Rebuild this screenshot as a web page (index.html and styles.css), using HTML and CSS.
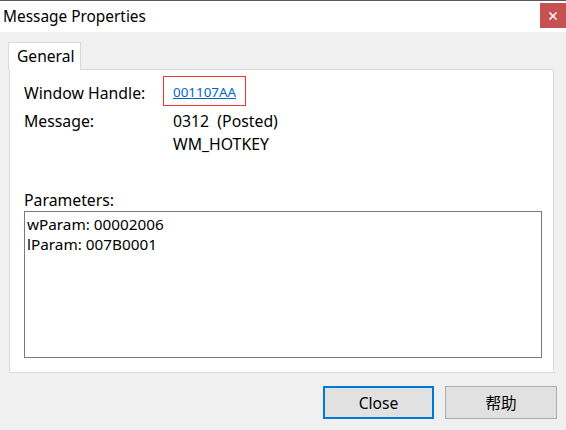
FILE: index.html
```html
<!DOCTYPE html>
<html>
<head>
<meta charset="utf-8">
<link rel="stylesheet" href="styles.css">
</head>
<body>
<div class="window">
  <div class="titlebar">
    <span class="title">Message Properties</span>
    <span class="close-x">
      <svg width="10" height="10" viewBox="0 0 10 10"><path d="M1.5 1.5 L8.5 8.5 M8.5 1.5 L1.5 8.5" stroke="#fff" stroke-width="1.6"/></svg>
    </span>
  </div>
  <div class="client">
    <div class="tabs">
      <div class="tab">General</div>
    </div>
    <div class="panel">
      <div class="row row-handle">
        <span class="label">Window Handle:</span>
        <span class="value"><span class="linkbox"><a class="link" href="#">001107AA</a></span></span>
      </div>
      <div class="row row-msg">
        <span class="label">Message:</span>
        <span class="value">0312&nbsp; (Posted)<br>WM_HOTKEY</span>
      </div>
      <div class="params-label">Parameters:</div>
      <div class="params">wParam: 00002006<br>lParam: 007B0001</div>
    </div>
    <div class="buttons">
      <button class="btn btn-default">Close</button>
      <button class="btn">帮助</button>
    </div>
  </div>
</div>
</body>
</html>
```

FILE: styles.css
```css
* { box-sizing: border-box; }
html, body { margin: 0; padding: 0; }
body {
  width: 566px;
  height: 430px;
  overflow: hidden;
  font-family: "Noto Sans", "Noto Sans CJK SC", sans-serif;
  font-size: 15.8px;
  color: #000;
  background: #f0f0f0;
}
.window {
  width: 566px;
  height: 430px;
  border-top: 1px solid #5a5a5a;
  display: flex;
  flex-direction: column;
}
.titlebar {
  height: 31px;
  background: #fff;
  display: flex;
  align-items: flex-start;
  justify-content: space-between;
}
.title {
  padding-left: 3px;
  line-height: 31px;
  font-size: 15.4px;
}
.close-x {
  width: 26px;
  height: 25px;
  margin-top: 2px;
  background: #c75050;
  display: flex;
  align-items: center;
  justify-content: center;
}
.client {
  flex: 1;
  background: #f0f0f0;
  padding: 10px 9px 0 8px;
}
.tabs {
  display: flex;
  height: 27px;
  position: relative;
  z-index: 1;
}
.tab {
  width: 73px;
  height: 28px;
  background: #fff;
  border: 1px solid #d9d9d9;
  border-bottom: none;
  padding-left: 8px;
  line-height: 27px;
  font-size: 15.6px;
}
.panel {
  margin-left: 1px;
  width: 545px;
  height: 304px;
  background: #fff;
  border: 1px solid #d9d9d9;
  padding: 6px 0 0 14px;
}
.row {
  display: flex;
}
.label {
  width: 149px;
  flex: none;
}
.row-handle {
  height: 30px;
  align-items: center;
}
.row-handle .label {
  padding-top: 3px;
}
.linkbox {
  display: inline-block;
  border: 1px solid #f03434;
  height: 30px;
  width: 83px;
  margin-left: -10px;
  padding-left: 9px;
  line-height: 28px;
}
.link {
  color: #0066cc;
  text-decoration: underline;
  font-size: 13.4px;
}
.row-msg {
  margin-top: 4px;
  line-height: 23px;
}
.params-label {
  margin-top: 33px;
  line-height: 22px;
}
.params {
  margin-top: 0;
  width: 518px;
  height: 147px;
  border: 1px solid #7a7a7a;
  padding: 2px 0 0 2px;
  line-height: 20px;
  font-size: 15.3px;
}
.buttons {
  display: flex;
  justify-content: flex-end;
  gap: 11px;
  margin-top: 13px;
}
.btn {
  width: 112px;
  height: 33px;
  background: #e1e1e1;
  border: 1px solid #adadad;
  font-family: "Noto Sans", "Noto Sans CJK SC", sans-serif;
  font-size: 15.6px;
  color: #000;
  padding: 0;
}
.btn-default {
  width: 111px;
  border: 2px solid #0078d7;
}
```
